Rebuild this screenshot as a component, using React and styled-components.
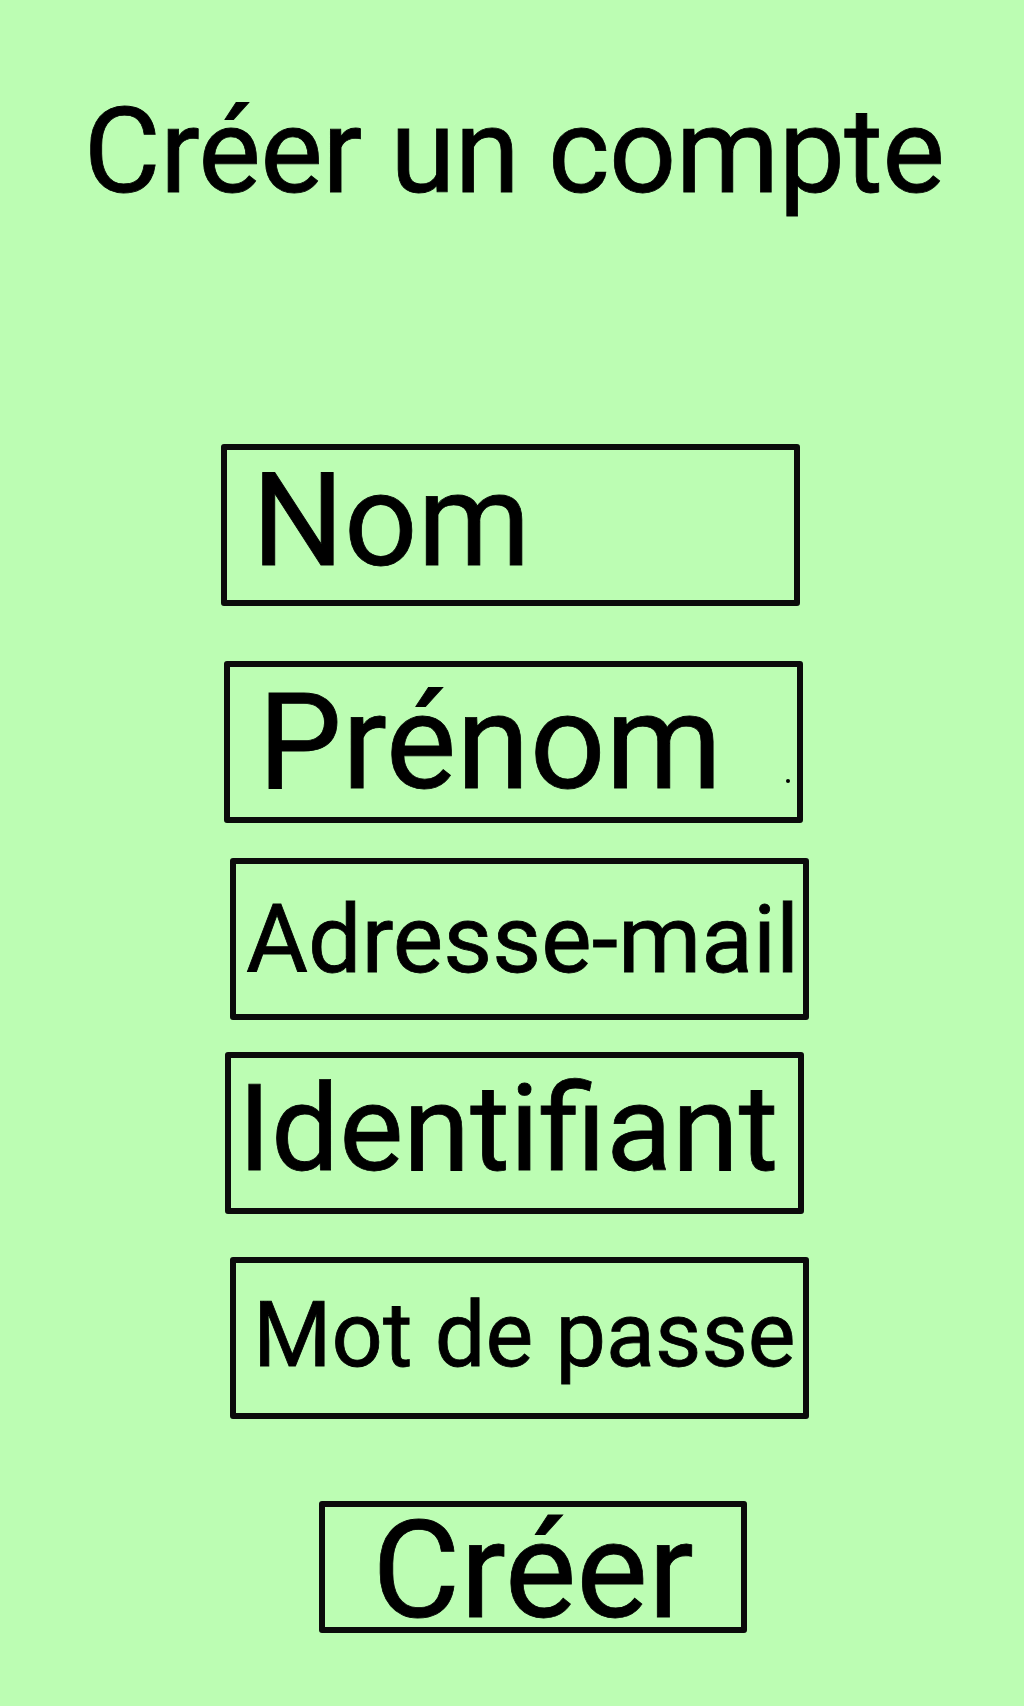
import styled, { createGlobalStyle } from 'styled-components';

const GlobalStyle = createGlobalStyle`
  html, body {
    margin: 0;
    padding: 0;
    background-color: #bcfdb3;
  }
  body {
    font-family: Roboto, "Liberation Sans", sans-serif;
    color: #000;
  }
`;

const Page = styled.main`
  width: 1024px;
  height: 1706px;
  background-color: #bcfdb3;
  display: flex;
  flex-direction: column;
  align-items: flex-start;
  overflow: hidden;
`;

const Title = styled.h1`
  align-self: center;
  margin: 93px 0 0 4px;
  font-size: 118px;
  line-height: 118px;
  font-weight: 400;
  letter-spacing: -0.6px;
  white-space: nowrap;
  -webkit-text-stroke: 0.8px #000;
`;

const Form = styled.form`
  display: flex;
  flex-direction: column;
  align-items: flex-start;
  margin-top: 233px;
`;

const Field = styled.div`
  box-sizing: border-box;
  width: 579px;
  height: 162px;
  margin-left: ${p => p.$left}px;
  margin-top: ${p => p.$top}px;
  padding-left: ${p => p.$pad}px;
  padding-bottom: ${p => p.$lift || 0}px;
  border: 6px solid #0b0b0b;
  border-radius: 3px;
  display: flex;
  align-items: center;
  font-size: ${p => p.$size}px;
  line-height: 1;
  white-space: nowrap;
  -webkit-text-stroke: 0.8px #000;
`;

const Speck = styled.span`
  width: 4px;
  height: 4px;
  border-radius: 50%;
  background: #000;
  margin: 78px 0 0 64px;
`;

const Submit = styled.button`
  box-sizing: border-box;
  width: 428px;
  height: 132px;
  margin: 82px 0 0 319px;
  padding: 8px 0 0;
  border: 6px solid #0b0b0b;
  border-radius: 3px;
  background: transparent;
  font-family: Roboto, "Liberation Sans", sans-serif;
  font-size: 135px;
  line-height: 1;
  color: #000;
  display: flex;
  align-items: center;
  justify-content: center;
  -webkit-text-stroke: 0.8px #000;
`;

const fields = [
  { label: 'Nom', left: 221, top: 0, pad: 25, size: 129, lift: 10 },
  { label: 'Prénom', left: 224, top: 55, pad: 28, size: 133, speck: true },
  { label: 'Adresse-mail', left: 230, top: 35, pad: 10, size: 95 },
  { label: 'Identifiant', left: 225, top: 32, pad: 7, size: 121, lift: 7 },
  { label: 'Mot de passe', left: 230, top: 43, pad: 17, size: 90, lift: 5 },
];

export default function App() {
  return (
    <>
      <GlobalStyle />
      <Page>
        <Title>Créer un compte</Title>
        <Form onSubmit={e => e.preventDefault()}>
          {fields.map(f => (
            <Field key={f.label} $left={f.left} $top={f.top} $pad={f.pad} $size={f.size} $lift={f.lift}>
              {f.label}
              {f.speck && <Speck />}
            </Field>
          ))}
          <Submit type="submit">Créer</Submit>
        </Form>
      </Page>
    </>
  );
}
